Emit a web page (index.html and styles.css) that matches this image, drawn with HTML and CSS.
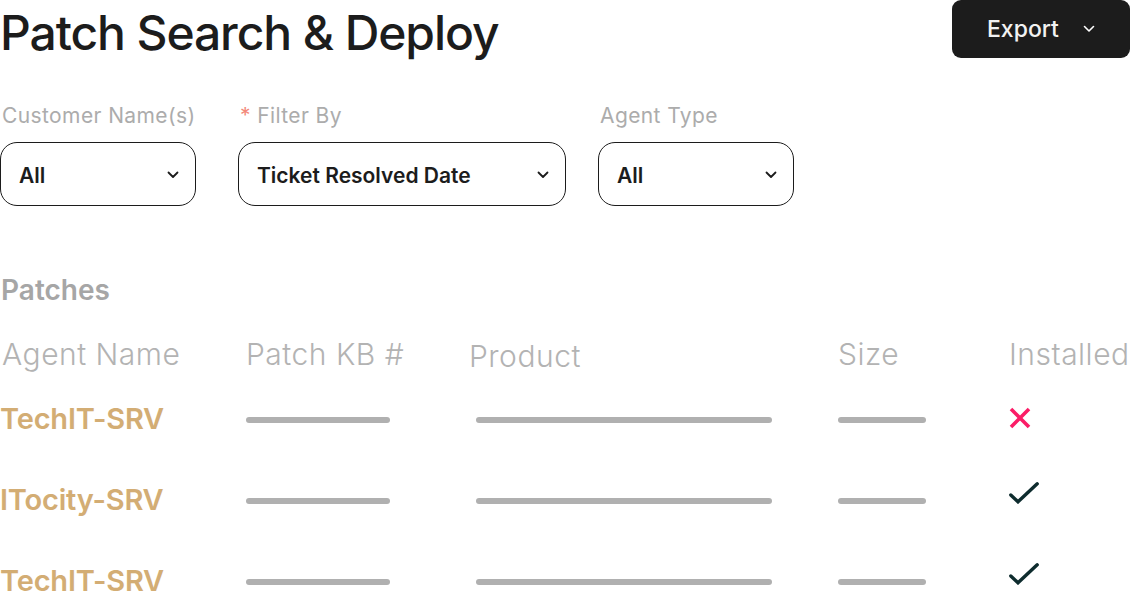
FILE: index.html
```html
<!DOCTYPE html>
<html>
<head>
<meta charset="utf-8">
<link rel="stylesheet" href="styles.css">
</head>
<body>
<div class="page">
  <header class="top">
    <h1 class="title">Patch Search &amp; Deploy</h1>
    <button class="export">Export
      <svg class="chev-sm" viewBox="0 0 12 8" width="12" height="8"><path d="M1.5 1.5 L6 6 L10.5 1.5" fill="none" stroke="#fff" stroke-width="1.6" stroke-linecap="round" stroke-linejoin="round"/></svg>
    </button>
  </header>

  <div class="filters">
    <div class="field f1">
      <div class="label">Customer Name(s)</div>
      <div class="select"><span>All</span><svg class="chev" viewBox="0 0 12 8" width="12" height="8"><path d="M1.5 1.5 L6 6 L10.5 1.5" fill="none" stroke="#1c1c1c" stroke-width="1.8" stroke-linecap="round" stroke-linejoin="round"/></svg></div>
    </div>
    <div class="field f2">
      <div class="label"><span class="req">*</span> Filter By</div>
      <div class="select"><span>Ticket Resolved Date</span><svg class="chev" viewBox="0 0 12 8" width="12" height="8"><path d="M1.5 1.5 L6 6 L10.5 1.5" fill="none" stroke="#1c1c1c" stroke-width="1.8" stroke-linecap="round" stroke-linejoin="round"/></svg></div>
    </div>
    <div class="field f3">
      <div class="label">Agent Type</div>
      <div class="select"><span>All</span><svg class="chev" viewBox="0 0 12 8" width="12" height="8"><path d="M1.5 1.5 L6 6 L10.5 1.5" fill="none" stroke="#1c1c1c" stroke-width="1.8" stroke-linecap="round" stroke-linejoin="round"/></svg></div>
    </div>
  </div>

  <h2 class="section">Patches</h2>

  <div class="table">
    <div class="row head">
      <div class="c1">Agent Name</div>
      <div class="c2">Patch KB #</div>
      <div class="c3 prod">Product</div>
      <div class="c4">Size</div>
      <div class="c5">Installed</div>
    </div>
    <div class="row">
      <div class="c1 name">TechIT-SRV</div>
      <div class="c2"><div class="bar b2"></div></div>
      <div class="c3"><div class="bar b3"></div></div>
      <div class="c4"><div class="bar b4"></div></div>
      <div class="c5"><svg class="icon-x" viewBox="0 0 22 22" width="22" height="22"><path d="M2 2 L20 20 M20 2 L2 20" stroke="#fb1d67" stroke-width="3.6" stroke-linecap="butt"/></svg></div>
    </div>
    <div class="row">
      <div class="c1 name">ITocity-SRV</div>
      <div class="c2"><div class="bar b2"></div></div>
      <div class="c3"><div class="bar b3"></div></div>
      <div class="c4"><div class="bar b4"></div></div>
      <div class="c5"><svg class="icon-check" viewBox="0 0 30 22" width="30" height="22"><path d="M1.8 13 L9 19.8 L28.2 1.8" fill="none" stroke="#0e2c2e" stroke-width="3.4" stroke-linecap="round" stroke-linejoin="miter"/></svg></div>
    </div>
    <div class="row">
      <div class="c1 name">TechIT-SRV</div>
      <div class="c2"><div class="bar b2"></div></div>
      <div class="c3"><div class="bar b3"></div></div>
      <div class="c4"><div class="bar b4"></div></div>
      <div class="c5"><svg class="icon-check" viewBox="0 0 30 22" width="30" height="22"><path d="M1.8 13 L9 19.8 L28.2 1.8" fill="none" stroke="#0e2c2e" stroke-width="3.4" stroke-linecap="round" stroke-linejoin="miter"/></svg></div>
    </div>
  </div>
</div>
</body>
</html>
```

FILE: styles.css
```css
* { box-sizing: border-box; }
html, body { margin: 0; padding: 0; background: #fff; }
body {
  font-family: Inter, "Noto Sans", sans-serif;
  color: #1c1c1c;
  width: 1130px;
  height: 596px;
  overflow: hidden;
}
.page { width: 1130px; }

.top {
  display: flex;
  justify-content: space-between;
  align-items: flex-start;
  height: 58px;
}
.title {
  margin: 0;
  font-size: 48px;
  font-weight: 500;
  letter-spacing: -1.1px;
  line-height: 66px;
  color: #1c1c1c;
}
.export {
  width: 178px;
  height: 58px;
  border: none;
  border-radius: 9px;
  background: #1c1c1c;
  color: #f2f2f2;
  font-family: inherit;
  font-size: 23px;
  font-weight: 500;
  display: flex;
  align-items: center;
  padding: 0 0 0 35px;
}
.chev-sm { margin-left: 24px; }

.filters {
  display: flex;
  margin-top: 44px;
}
.field { display: flex; flex-direction: column; }
.f1 { width: 196px; }
.f2 { width: 328px; margin-left: 42px; }
.f3 { width: 196px; margin-left: 32px; }
.label {
  font-size: 21px;
  letter-spacing: 0.4px;
  color: #acacac;
  line-height: 28px;
  padding-left: 2px;
  height: 28px;
}
.req { color: #f3897a; }
.select {
  margin-top: 12px;
  height: 64px;
  border: 1.5px solid #1c1c1c;
  border-radius: 17px;
  display: flex;
  align-items: center;
  justify-content: space-between;
  padding: 2px 16px 0 18px;
  font-size: 21px;
  font-weight: 600;
  color: #1c1c1c;
}

.section {
  margin: 68px 0 0 0;
  font-size: 28px;
  font-weight: 600;
  color: #a6a6a6;
  line-height: 32px;
  padding-left: 1px;
}

.table { margin-top: 28px; }
.row {
  display: grid;
  grid-template-columns: 246px 223px 369px 170px 122px;
  align-items: center;
  height: 81px;
}
.row.head {
  height: 40px;
  margin-bottom: 4px;
  font-size: 30px;
  letter-spacing: 0.5px;
  font-weight: 300;
  color: #b3b3b3;
  white-space: nowrap;
}
.row.head .c1 { padding-left: 2px; }
.prod { position: relative; top: 2px; }
.name {
  font-size: 29px;
  font-weight: 600;
  color: #d3ad74;
  letter-spacing: -0.2px;
}
.bar {
  height: 6px;
  border-radius: 3px;
  background: #b0b0b0;
  margin-top: 3px;
}
.b2 { width: 144px; }
.b3 { width: 296px; margin-left: 7px; }
.b4 { width: 88px; }
.c5 { padding-left: 1px; display: flex; align-items: center; }
.icon-x { display: block; margin-top: -2px; }
.icon-check { display: block; margin-top: -14px; }
```
